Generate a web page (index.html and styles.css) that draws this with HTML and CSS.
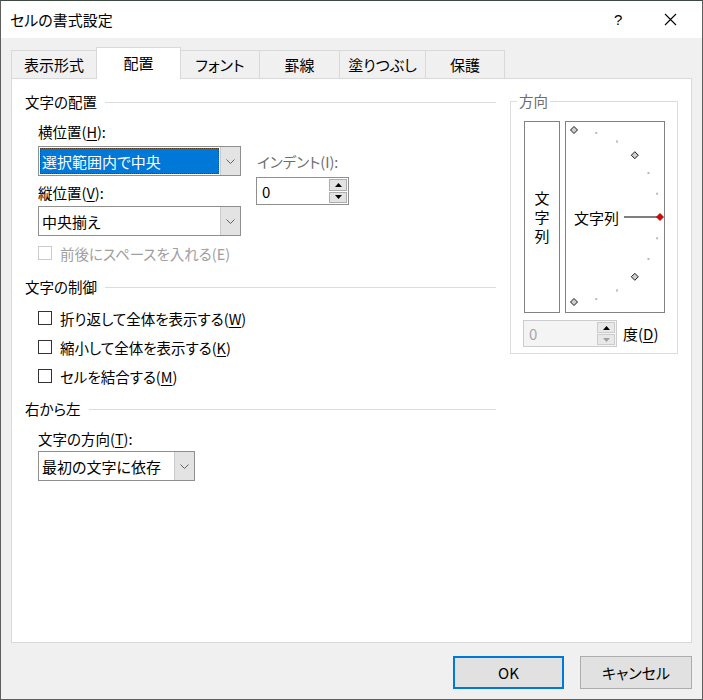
FILE: index.html
```
<html>
    <head>
        <meta name="viewport" content="width=device-width, initial-scale=1">
        <title>セルの書式設定</title>
        <link rel="stylesheet" href="styles.css">
    </head>
    <body>
        <div class="window">
            <div class="titlebar">
                <span class="title">セルの書式設定</span>
                <span class="help">?</span>
                <span class="close">
                    <svg width="13" height="13" viewBox="0 0 13 13"><path d="M1 1 L12 12 M12 1 L1 12" stroke="#000" stroke-width="1.1" fill="none"/></svg>
                </span>
            </div>
            <div class="dialog-body">
                <div class="tabs">
                    <div class="tab t1">表示形式</div>
                    <div class="tab t2 active">配置</div>
                    <div class="tab t3">フォント</div>
                    <div class="tab t4">罫線</div>
                    <div class="tab t5">塗りつぶし</div>
                    <div class="tab t6">保護</div>
                </div>
                <div class="panel">
                    <div class="left-col">
                        <div class="group-head head-align"><span>文字の配置</span><i></i></div>
                        <div class="align-row">
                            <div class="align-col">
                                <div class="label label-h">横位置(<u>H</u>):</div>
                                <div class="combo combo-h focused">
                                    <div class="combo-value"><span class="sel">選択範囲内で中央</span></div>
                                    <div class="combo-btn"><svg width="9" height="5" viewBox="0 0 9 5"><path d="M0.5 0.5 L4.5 4.5 L8.5 0.5" stroke="#606060" fill="none"/></svg></div>
                                </div>
                                <div class="label label-v">縦位置(<u>V</u>):</div>
                                <div class="combo combo-v">
                                    <div class="combo-value">中央揃え</div>
                                    <div class="combo-btn"><svg width="9" height="5" viewBox="0 0 9 5"><path d="M0.5 0.5 L4.5 4.5 L8.5 0.5" stroke="#606060" fill="none"/></svg></div>
                                </div>
                            </div>
                            <div class="indent-col">
                                <div class="label disabled-text">インデント(I):</div>
                                <div class="spinner indent-spin">
                                    <div class="spin-value">0</div>
                                    <div class="spin-btns">
                                        <div class="spin-btn"><svg width="7" height="4" viewBox="0 0 7 4"><path d="M0 4 L3.5 0 L7 4 Z" fill="#000"/></svg></div>
                                        <div class="spin-btn"><svg width="7" height="4" viewBox="0 0 7 4"><path d="M0 0 L3.5 4 L7 0 Z" fill="#000"/></svg></div>
                                    </div>
                                </div>
                            </div>
                        </div>
                        <div class="check-row disabled cb-space"><span class="box"></span><span>前後にスペースを入れる(E)</span></div>

                        <div class="group-head head-control"><span>文字の制御</span><i></i></div>
                        <div class="check-row cb-wrap"><span class="box"></span><span>折り返して全体を表示する(<u>W</u>)</span></div>
                        <div class="check-row cb-shrink"><span class="box"></span><span>縮小して全体を表示する(<u>K</u>)</span></div>
                        <div class="check-row cb-merge"><span class="box"></span><span>セルを結合する(<u>M</u>)</span></div>

                        <div class="group-head head-rtl"><span>右から左</span><i></i></div>
                        <div class="label label-t">文字の方向(<u>T</u>):</div>
                        <div class="combo combo-t">
                            <div class="combo-value">最初の文字に依存</div>
                            <div class="combo-btn"><svg width="9" height="5" viewBox="0 0 9 5"><path d="M0.5 0.5 L4.5 4.5 L8.5 0.5" stroke="#606060" fill="none"/></svg></div>
                        </div>
                    </div>

                    <div class="direction">
                        <span class="legend">方向</span>
                        <div class="dir-boxes">
                            <div class="vbox"><span>文</span><span>字</span><span>列</span></div>
                            <div class="dial">
                                <svg width="98" height="190" viewBox="0 0 98 190">
                                    <g fill="#b9b9b9">
                                        <rect x="29.3" y="9.9" width="2" height="2"/>
                                        <rect x="50" y="18.5" width="2" height="2"/>
                                        <rect x="81.5" y="50" width="2" height="2"/>
                                        <rect x="90.1" y="70.7" width="2" height="2"/>
                                        <rect x="90.1" y="115.3" width="2" height="2"/>
                                        <rect x="81.5" y="136" width="2" height="2"/>
                                        <rect x="50" y="167.5" width="2" height="2"/>
                                        <rect x="29.3" y="176.1" width="2" height="2"/>
                                    </g>
                                    <g fill="#cfcfcf" stroke="#1a1a1a" stroke-width="1">
                                        <path d="M8 4.5 L11.5 8 L8 11.5 L4.5 8 Z"/>
                                        <path d="M68.8 29.7 L72.3 33.2 L68.8 36.7 L65.3 33.2 Z"/>
                                        <path d="M68.8 151.3 L72.3 154.8 L68.8 158.3 L65.3 154.8 Z"/>
                                        <path d="M8 176.5 L11.5 180 L8 183.5 L4.5 180 Z"/>
                                    </g>
                                    <line x1="58" y1="95" x2="91" y2="95" stroke="#000" stroke-width="1"/>
                                    <path d="M94 91.5 L97.5 95 L94 98.5 L90.5 95 Z" fill="#e00000" stroke="#900000" stroke-width="0.8"/>
                                </svg>
                                <span class="dial-text">文字列</span>
                            </div>
                        </div>
                        <div class="degree-row">
                            <div class="spinner degree-spin">
                                <div class="spin-value">0</div>
                                <div class="spin-btns">
                                    <div class="spin-btn"><svg width="7" height="4" viewBox="0 0 7 4"><path d="M0 4 L3.5 0 L7 4 Z" fill="#000"/></svg></div>
                                    <div class="spin-btn"><svg width="7" height="4" viewBox="0 0 7 4"><path d="M0 0 L3.5 4 L7 0 Z" fill="#a0a0a0"/></svg></div>
                                </div>
                            </div>
                            <span class="degree-label">度(<u>D</u>)</span>
                        </div>
                    </div>
                </div>
                <div class="footer">
                    <button type="button" class="btn btn-ok">OK</button>
                    <button type="button" class="btn btn-cancel">キャンセル</button>
                </div>
            </div>
        </div>
    </body>
</html>
```

FILE: styles.css
```
* {
    box-sizing: border-box;
}
body {
    margin: 0;
    font-family: "Noto Sans CJK JP", "Noto Sans", sans-serif;
    font-feature-settings: "palt";
    font-size: 14.5px;
    color: #000;
}
u {
    text-decoration: underline;
    text-underline-offset: 2px;
}
.window {
    width: 703px;
    height: 700px;
    border: 1px solid #5e5e5e;
    border-top-color: #3c4a42;
    background: #f0f0f0;
}
.titlebar {
    height: 37px;
    background: #fff;
    display: flex;
    align-items: center;
    padding-left: 9px;
}
.title {
    font-size: 15px;
    flex: 1;
}
.help {
    font-family: "Liberation Sans", sans-serif;
    font-size: 15px;
    width: 50px;
}
.close {
    width: 38px;
    display: flex;
    align-items: center;
}
.dialog-body {
    padding-top: 12px;
}

/* tabs */
.tabs {
    display: flex;
    align-items: flex-end;
    margin-left: 10px;
    height: 29px;
    margin-bottom: -1px;
}
.tab {
    height: 29px;
    border: 1px solid #d9d9d9;
    border-bottom: none;
    margin-right: -1px;
    display: flex;
    align-items: center;
    justify-content: center;
    padding-bottom: 1px;
    font-size: 15px;
}
.tab.active {
    background: #fff;
    height: 32px;
    position: relative;
    z-index: 1;
    padding-bottom: 3px;
}
.t1 { width: 86px; }
.t2 { width: 85px; }
.t3 { width: 80px; }
.t4 { width: 81px; }
.t5 { width: 87px; }
.t6 { width: 80px; }

/* panel */
.panel {
    margin-left: 10px;
    width: 681px;
    height: 565px;
    background: #fff;
    border: 1px solid #d9d9d9;
    padding: 13px 0 0 13px;
    display: flex;
    align-items: flex-start;
}
.left-col {
    width: 471px;
}
.group-head {
    display: flex;
    align-items: center;
    height: 20px;
    line-height: 20px;
}
.group-head i {
    flex: 1;
    height: 1px;
    background: #dcdcdc;
    margin-left: 8px;
}
.head-control { margin-top: 14px; }
.head-rtl { margin-top: 13px; }

.label {
    height: 20px;
    line-height: 20px;
    margin-left: 13px;
}
.align-row {
    display: flex;
    margin-top: 10px;
}
.align-col .label {
    margin-left: 13px;
}
.label-v { margin-top: 7px; }
.label-t { margin-top: 10px; margin-left: 13px; }

.combo {
    display: flex;
    height: 30px;
    margin-left: 13px;
    border: 1px solid #8f8f8f;
    background: #fff;
}
.combo-h { width: 203px; margin-top: 4px; }
.combo-v { width: 203px; margin-top: 3px; }
.combo-t { width: 157px; margin-top: 2px; }
.combo-value {
    flex: 1;
    display: flex;
    align-items: center;
    padding-left: 3px;
    font-size: 15px;
}
.combo.focused .combo-value {
    padding: 1px;
}
.sel {
    flex: 1;
    height: 100%;
    background: #0078d7;
    color: #fff;
    display: flex;
    align-items: center;
    padding-left: 2px;
    outline: 1px dotted #5a3a1a;
    outline-offset: -1px;
}
.combo-btn {
    width: 20px;
    background: #e3e3e3;
    border-left: 1px solid #c9c9c9;
    display: flex;
    align-items: center;
    justify-content: center;
}

.indent-col {
    margin-left: 15px;
    padding-top: 30px;
}
.indent-col .label {
    margin-left: 1px;
}
.disabled-text {
    color: #6d6d6d;
}

.spinner {
    display: flex;
    border: 1px solid #8f8f8f;
    background: #fff;
}
.indent-spin {
    width: 93px;
    height: 28px;
    margin-top: 5px;
}
.spin-value {
    flex: 1;
    display: flex;
    align-items: center;
    padding-left: 5px;
    font-size: 15px;
}
.spin-btns {
    width: 19px;
    display: flex;
    flex-direction: column;
    padding: 1px 1px 1px 0;
    gap: 1px;
}
.spin-btn {
    flex: 1;
    background: #e3e3e3;
    border: 1px solid #adadad;
    display: flex;
    align-items: center;
    justify-content: center;
}

/* checkboxes */
.check-row {
    display: flex;
    align-items: center;
    height: 20px;
    margin-left: 13px;
    gap: 8px;
}
.check-row .box {
    width: 14px;
    height: 14px;
    border: 1px solid #333;
    background: #fff;
}
.check-row.disabled {
    color: #a0a0a0;
}
.check-row.disabled .box {
    border-color: #cccccc;
}
.cb-space { margin-top: 7px; }
.cb-wrap { margin-top: 11px; }
.cb-shrink { margin-top: 9px; }
.cb-merge { margin-top: 9px; }

/* direction group */
.direction {
    position: relative;
    width: 168px;
    margin-left: 14px;
    margin-top: 9px;
    border: 1px solid #dcdcdc;
    padding: 19px 0 6px 13px;
}
.legend {
    position: absolute;
    top: -11px;
    left: 6px;
    padding: 0 2px;
    background: #fff;
    color: #6d6d6d;
    line-height: 20px;
}
.dir-boxes {
    display: flex;
    gap: 5px;
}
.vbox {
    width: 36px;
    height: 192px;
    border: 1px solid #828282;
    display: flex;
    flex-direction: column;
    align-items: center;
    justify-content: center;
    line-height: 19px;
    font-size: 15px;
    padding-bottom: 2px;
}
.dial {
    position: relative;
    width: 100px;
    height: 192px;
    border: 1px solid #828282;
}
.dial svg {
    display: block;
}
.dial-text {
    position: absolute;
    left: 8px;
    top: 86px;
    line-height: 20px;
    font-size: 15px;
}
.degree-row {
    display: flex;
    align-items: center;
    margin-top: 7px;
    margin-left: -1px;
}
.degree-spin {
    width: 94px;
    height: 27px;
    background: #f4f4f4;
    border-color: #cccccc;
}
.degree-spin .spin-value {
    color: #a6a6a6;
}
.degree-spin .spin-btn {
    background: #e8e8e8;
    border-color: #cccccc;
}
.degree-label {
    margin-left: 6px;
    font-size: 15px;
}

/* buttons */
.footer {
    display: flex;
    justify-content: flex-end;
    gap: 16px;
    margin-top: 13px;
    padding-right: 10px;
}
.btn {
    font-family: "Noto Sans CJK JP", "Noto Sans", sans-serif;
    font-feature-settings: "palt";
    font-size: 15px;
    height: 33px;
    background: #e1e1e1;
    border: 1px solid #adadad;
    color: #000;
    padding: 0;
}
.btn-ok {
    width: 111px;
    border: 2px solid #0078d7;
}
.btn-cancel {
    width: 112px;
}
```
